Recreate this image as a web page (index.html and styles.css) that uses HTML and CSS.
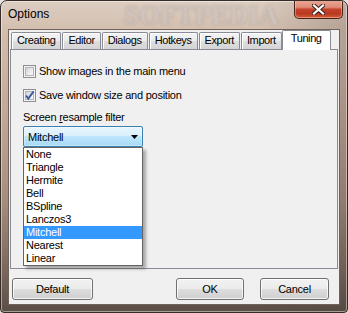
FILE: index.html
```html
<!DOCTYPE html>
<html>
<head>
<meta charset="utf-8">
<title>Options</title>
<link rel="stylesheet" href="styles.css">
</head>
<body>
<div class="window">
  <div class="titlebar">
    <span class="title">Options</span>
    <span class="watermark" aria-hidden="true">SOFTPEDIA</span>
    <button class="close" aria-label="Close">
      <svg width="13" height="11" viewBox="0 0 13 11">
        <path d="M2 1.5 L11 9.5 M11 1.5 L2 9.5" stroke="#3a2620" stroke-width="4.2" stroke-linecap="square" fill="none"/>
        <path d="M2 1.5 L11 9.5 M11 1.5 L2 9.5" stroke="#ffffff" stroke-width="2.2" stroke-linecap="square" fill="none"/>
      </svg>
    </button>
  </div>
  <div class="client">
    <div class="tabs">
      <div class="tab">Creating</div>
      <div class="tab">Editor</div>
      <div class="tab">Dialogs</div>
      <div class="tab">Hotkeys</div>
      <div class="tab">Export</div>
      <div class="tab">Import</div>
      <div class="tab active">Tuning</div>
    </div>
    <div class="panel">
      <label class="check"><span class="box"></span><span>Show images in the main menu</span></label>
      <label class="check"><span class="box checked">
        <svg width="11" height="11" viewBox="0 0 11 11"><path d="M2 5.5 L4.3 8.6 L9.6 1.4" stroke="#3f5b9e" stroke-width="1.9" fill="none"/></svg>
      </span><span>Save window size and position</span></label>
      <div class="field-label">Screen <u>r</u>esample filter</div>
      <div class="combo-wrap">
        <div class="combo">
          <span>Mitchell</span>
          <svg class="arrow" width="7" height="4" viewBox="0 0 7 4"><path d="M0 0 H7 L3.5 4 Z" fill="#000"/></svg>
        </div>
        <ul class="list">
          <li>None</li>
          <li>Triangle</li>
          <li>Hermite</li>
          <li>Bell</li>
          <li>BSpline</li>
          <li>Lanczos3</li>
          <li class="selected">Mitchell</li>
          <li>Nearest</li>
          <li>Linear</li>
        </ul>
      </div>
    </div>
    <div class="buttons">
      <button class="btn btn-default">Default</button>
      <button class="btn btn-ok">OK</button>
      <button class="btn btn-cancel">Cancel</button>
    </div>
  </div>
</div>
</body>
</html>
```
FILE: styles.css
```css
* { box-sizing: border-box; }
html, body { margin: 0; padding: 0; }
body {
  width: 348px;
  height: 313px;
  overflow: hidden;
  background: #e8e4e0;
  font-family: "Liberation Sans", Arial, sans-serif;
  font-size: 11px;
  letter-spacing: -0.25px;
  color: #000;
}
.window {
  width: 348px;
  height: 313px;
  border: 1px solid #362c28;
  border-radius: 7px 7px 4px 4px;
  padding: 0 7px 7px;
  display: flex;
  flex-direction: column;
  position: relative;
  overflow: hidden;
  background:
    linear-gradient(90deg, rgba(255,255,255,0) 0%, rgba(255,255,255,0) 75%, rgba(70,60,55,0.22) 100%),
    linear-gradient(180deg, #dccdc1 0px, #d3beae 30px, #c3a997 110px, #a58d7d 200px, #7a675c 270px, #594c45 313px);
  box-shadow: inset 0 0 0 1px rgba(255,255,255,0.45);
}
.titlebar {
  height: 28px;
  display: flex;
  align-items: flex-start;
  margin-right: -3px;
  position: relative;
}
.title {
  font-size: 12px;
  letter-spacing: 0;
  line-height: 14px;
  margin-top: 6px;
  position: relative;
  z-index: 1;
}
.watermark {
  position: absolute;
  left: 116px;
  top: 1px;
  font-family: "Liberation Serif", serif;
  font-weight: bold;
  font-size: 27px;
  line-height: 27px;
  letter-spacing: 0;
  color: rgba(214, 204, 198, 0.9);
  text-shadow: 0 0 2px rgba(110, 95, 88, 0.6);
  filter: blur(1.1px);
  pointer-events: none;
}
.close {
  margin-left: auto;
  width: 49px;
  height: 19px;
  margin-top: -1px;
  padding: 0;
  border: 1px solid #4e2219;
  border-top: none;
  border-radius: 0 0 5px 5px;
  display: flex;
  align-items: center;
  justify-content: center;
  position: relative;
  z-index: 1;
  background: linear-gradient(180deg, #eaa898 0%, #de8c78 40%, #c4432b 52%, #b9381e 75%, #d65c39 100%);
  box-shadow: inset 0 0 0 1px rgba(255, 210, 200, 0.45);
}
.close svg { display: block; margin-top: 1px; }
.client {
  flex: 1;
  border: 1px solid #6f625b;
  background: #f0f0f0;
  display: flex;
  flex-direction: column;
}
.tabs {
  height: 19px;
  display: flex;
  align-items: flex-end;
  padding-left: 2px;
  position: relative;
  z-index: 1;
}
.tab {
  flex: none;
  height: 17px;
  padding: 0 5px;
  margin-right: 1px;
  line-height: 15px;
  letter-spacing: -0.4px;
  border: 1px solid #898c95;
  border-bottom: none;
  border-radius: 2px 2px 0 0;
  background: linear-gradient(180deg, #f3f3f3 0%, #ebebeb 50%, #dedede 52%, #d4d4d4 100%);
  box-shadow: inset 1px 1px 0 #ffffff;
  white-space: nowrap;
}
.tab.active {
  height: 20px;
  margin: 0 -2px -1px -1px;
  padding: 0 8px;
  line-height: 15px;
  background: #ffffff;
  box-shadow: none;
}
.panel {
  flex: 1;
  margin: 0 1px;
  border: 1px solid #898c95;
  background: #f0f0f0;
  padding: 15px 0 0 12px;
  position: relative;
}
.check {
  display: flex;
  align-items: center;
  height: 13px;
  line-height: 13px;
  gap: 3px;
}
.check + .check { margin-top: 11px; }
.box {
  width: 13px;
  height: 13px;
  flex: none;
  border: 1px solid #8f8f8f;
  background: #f4f4f4;
  position: relative;
}
.box::before {
  content: "";
  position: absolute;
  left: 1px; top: 1px; right: 1px; bottom: 1px;
  border: 1px solid #b1b5ba;
  background: linear-gradient(135deg, #cfd3d8 0%, #e9eaec 55%, #f8f8f8 100%);
}
.box svg { position: absolute; left: 0; top: 0; }
.field-label {
  margin-top: 9px;
  line-height: 13px;
  height: 13px;
}
.combo-wrap {
  position: relative;
  width: 120px;
  margin-top: 2px;
}
.combo {
  height: 21px;
  border: 1px solid #3c7fb1;
  border-radius: 2px;
  background: linear-gradient(180deg, #eaf6fd 0%, #d9f0fc 45%, #bee6fd 50%, #a7d9f5 100%);
  box-shadow: inset 0 0 0 1px rgba(255,255,255,0.35);
  display: flex;
  align-items: center;
  padding: 0 0 0 4px;
}
.combo span { flex: 1; }
.combo .arrow { margin-right: 4px; }
.list {
  position: absolute;
  left: 0;
  top: 100%;
  width: 120px;
  margin: 0;
  padding: 0;
  list-style: none;
  background: #ffffff;
  border: 1px solid #646464;
  box-shadow: 3px 3px 3px rgba(0,0,0,0.3);
  z-index: 2;
}
.list li {
  height: 13px;
  line-height: 13px;
  padding-left: 2px;
}
.list li.selected {
  background: #3399ff;
  color: #ffffff;
}
.buttons {
  height: 35px;
  display: flex;
  align-items: flex-start;
  padding: 9px 10px 0 3px;
}
.btn {
  height: 22px;
  padding: 0;
  border: 1px solid #707070;
  border-radius: 3px;
  font-family: "Liberation Sans", Arial, sans-serif;
  font-size: 11px;
  letter-spacing: -0.25px;
  color: #000;
  background: linear-gradient(180deg, #f2f2f2 0%, #ebebeb 48%, #dddddd 52%, #cfcfcf 100%);
  box-shadow: inset 0 0 0 1px rgba(255,255,255,0.75);
}
.btn-default { width: 81px; }
.btn-ok { width: 68px; margin-left: auto; }
.btn-cancel { width: 69px; margin-left: 16px; }
```
